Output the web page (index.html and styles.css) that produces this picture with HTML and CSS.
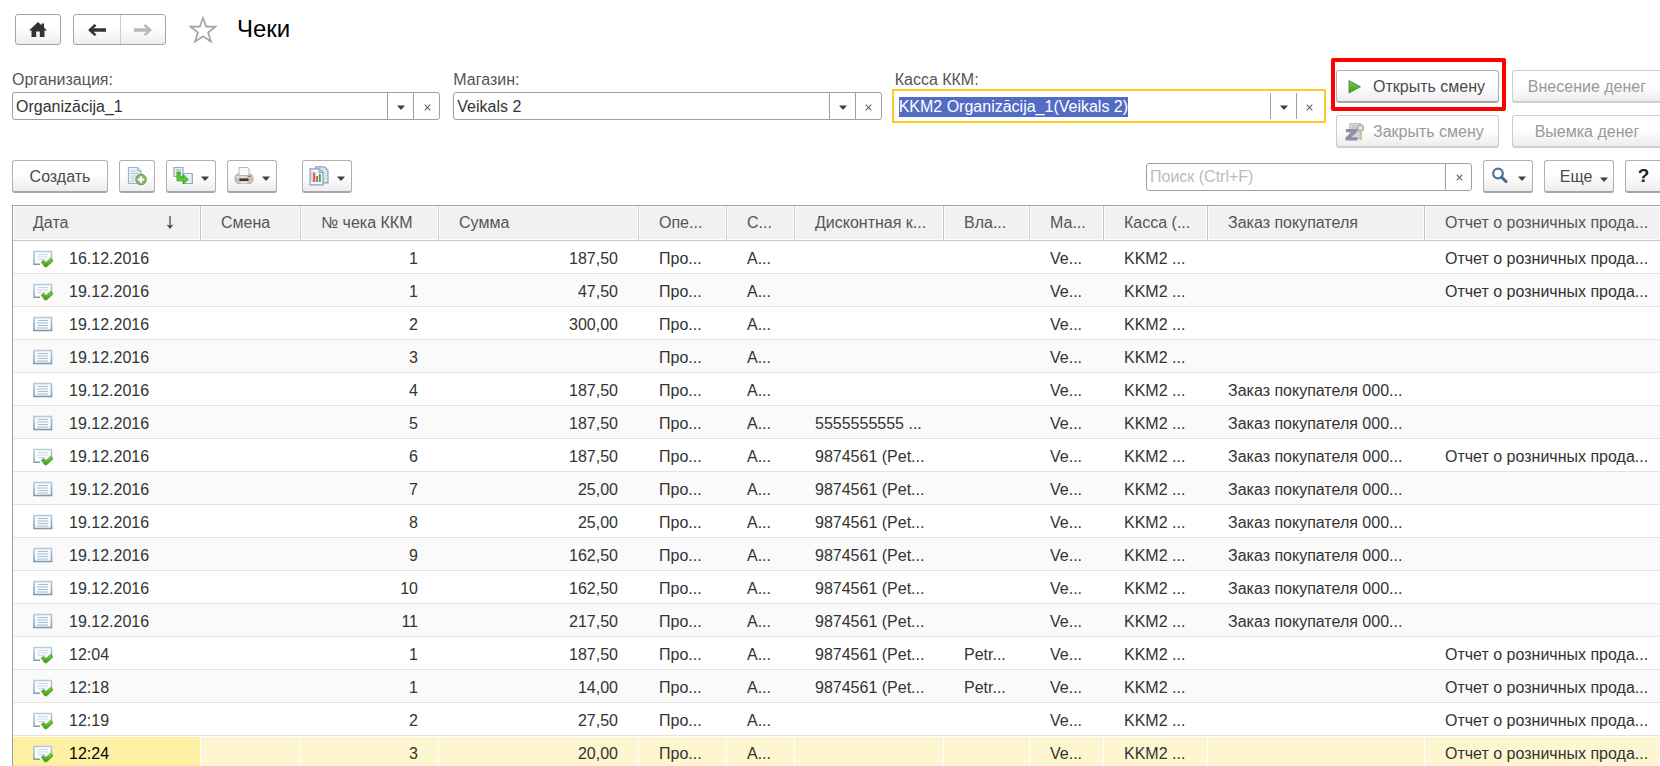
FILE: index.html
```html
<!DOCTYPE html>
<html lang="ru">
<head>
<meta charset="utf-8">
<title>Чеки</title>
<link rel="stylesheet" href="styles.css">
</head>
<body>
<svg class="sprite" aria-hidden="true">
  <defs>
    <linearGradient id="paper" x1="0" y1="0" x2="0" y2="1"><stop offset="0" stop-color="#b9cbdb"/><stop offset="1" stop-color="#8298ab"/></linearGradient>
    <linearGradient id="green" x1="0" y1="0" x2="0" y2="1"><stop offset="0" stop-color="#7ad04a"/><stop offset="1" stop-color="#3a9a1c"/></linearGradient>
  </defs>
  <symbol id="doc" viewBox="0 0 20 18">
    <rect x="1" y="1.500" width="17.500" height="13" fill="#f7fafc" stroke="url(#paper)" stroke-width="1.600"/>
    <path d="M5 4.500h10M4 7h11M5 9.500h10M4 12h11" stroke="#a3bfd4" stroke-width="1.200"/>
  </symbol>
  <symbol id="posted" viewBox="0 0 20 18">
    <path d="M7 14.300H1V1.500h17.500v7" fill="#fbfcfd" stroke="url(#paper)" stroke-width="1.400"/>
    <path d="M5 4.500h10M4 7h11M5 9.500h7" stroke="#ccd9e4" stroke-width="1.200"/>
    <path d="M8.300 12.200l2-2 2.800 2.200 4.600-4.200 1.800 1.400v2L13.400 17l-1.700-.3z" fill="url(#green)" stroke="#43962a" stroke-width=".7"/>
  </symbol>
  <symbol id="down" viewBox="0 0 8 5"><path d="M0 .5h8L4.500 4.500h-1z" fill="#404040"/></symbol>
  <symbol id="cross" viewBox="0 0 7 7"><path d="M.7.700l5.600 5.600M6.300.700L.7 6.300" stroke="#666" stroke-width="1.100"/></symbol>
</svg>

<div class="page">
  <header class="topbar">
    <button class="btn nav home" aria-label="Домой"><svg width="18" height="16" viewBox="0 0 18 16"><path d="M9 0L0 8.500h2.500V15h4.700V9.500h3.600V15h4.700V8.500H18l-3-2.900V1.500h-2.500v1.800z" fill="#333"/></svg></button>
    <div class="btn history">
      <button class="nav" aria-label="Назад"><svg width="18" height="14" viewBox="0 0 18 14"><path d="M0 7l6.500-6 2 1.700L5.500 5.300H18v3.400H5.500l3 2.700-2 1.600z" fill="#333"/></svg></button>
      <button class="nav" aria-label="Вперед" disabled><svg width="18" height="14" viewBox="0 0 18 14"><path d="M18 7l-6.500-6-2 1.700 3 2.600H0v3.400h12.500l-3 2.700 2 1.600z" fill="#b8b8b8"/></svg></button>
    </div>
    <button class="star" aria-label="В избранное"><svg width="28" height="28" viewBox="0 0 28 28"><path d="M14 2l3.200 8.700H26.500l-7.400 5.800L22 25.700l-8-5.500-8 5.500 2.900-9.200-7.400-5.800h9.300z" fill="#fff" stroke="#a3a3a3" stroke-width="1.700"/></svg></button>
    <h1 class="title">Чеки</h1>
  </header>

  <section class="filters">
    <div class="field">
      <label for="org">Организация:</label>
      <div class="combo"><input id="org" type="text" value="Organizācija_1"><button aria-label="Выбрать"><svg class="arrow"><use href="#down"/></svg></button><button aria-label="Очистить"><svg class="clear"><use href="#cross"/></svg></button></div>
    </div>
    <div class="field">
      <label for="shop">Магазин:</label>
      <div class="combo"><input id="shop" type="text" value="Veikals 2"><button aria-label="Выбрать"><svg class="arrow"><use href="#down"/></svg></button><button aria-label="Очистить"><svg class="clear"><use href="#cross"/></svg></button></div>
    </div>
    <div class="field">
      <label for="kkm">Касса ККМ:</label>
      <div class="combo active"><input id="kkm" type="text" value="KKM2 Organizācija_1(Veikals 2)"><button aria-label="Выбрать"><svg class="arrow"><use href="#down"/></svg></button><button aria-label="Очистить"><svg class="clear"><use href="#cross"/></svg></button></div>
    </div>
    <div class="shift">
      <div class="marked"><button class="btn wide"><svg width="20" height="18" viewBox="0 0 20 18"><path d="M4 2.500l11.500 6.300L4 15z" fill="url(#green)" stroke="#4d7d45" stroke-width=".8"/></svg>Открыть смену</button></div>
      <button class="btn" disabled>Внесение денег</button>
      <button class="btn wide" disabled><svg width="20" height="18" viewBox="0 0 20 18"><path d="M4.500 .5h11v15h-11z" fill="#d6d6d6" stroke="#c4c4c4"/><path d="M6.500 3h5M6.500 5h5" stroke="#bbb"/><circle cx="15.500" cy="5" r="3" fill="#e8e0cc" stroke="#b5ad9c" stroke-width="1.400"/><path d="M14.500 8h2.500v9h-2.500z" fill="#c9c1ae"/><path d="M1 6h11.500v2.600L6.300 14.300h6.200v3.200H.5v-3.200L6.500 9.200H1z" fill="#8e8ea6"/></svg>Закрыть смену</button>
      <button class="btn" disabled>Выемка денег</button>
    </div>
  </section>

  <section class="toolbar">
    <button class="btn create">Создать</button>
    <button class="btn square" aria-label="Скопировать"><svg width="20" height="20" viewBox="0 0 20 20"><path d="M1.500 1.500h9l3.500 3.500v12.500H1.500z" fill="#edf3f8" stroke="#9db4c8" stroke-width="1.200"/><path d="M10.500 1.500V5H14" fill="#cddbe7" stroke="#9db4c8"/><path d="M3.500 5h5M3.500 7.500h8M3.500 10h7M3.500 12.500h4M3.500 15h4" stroke="#a9c2d6"/><circle cx="14" cy="13.500" r="5.300" fill="#86ba68" stroke="#699b51" stroke-width="1"/><path d="M14 10.300v6.400M10.800 13.500h6.400" stroke="#fff" stroke-width="2.200"/></svg></button>
    <button class="btn drop" aria-label="Создать на основании"><svg width="20" height="20" viewBox="0 0 20 20"><path d="M1 1.500h9v9H1z" fill="#e9f0f6" stroke="#8faac1" stroke-width="1.200"/><path d="M3 4h5M3 6h5" stroke="#8faac1"/><path d="M10 7.500h9.300v10H10z" fill="#eaf2f8" stroke="#8faac1" stroke-width="1.200"/><path d="M4 6.500h3.200v5h3.300V8.800l4.700 4.700-4.700 4.500v-3.200H4z" fill="#56cf2e" stroke="#2fa314" stroke-width=".9"/></svg><svg class="arrow"><use href="#down"/></svg></button>
    <button class="btn drop" aria-label="Печать"><svg width="20" height="20" viewBox="0 0 20 20"><path d="M3 8h14l2 2v5l-2 2.500H3L1 15v-5z" fill="#cdbfb4" stroke="#b9aba0" stroke-width=".8"/><path d="M5 1.500h8.500L15 3v6.500H5z" fill="#f8fafc" stroke="#a9b9c8"/><path d="M2 11h16" stroke="#e9dfd6" stroke-width="1.500"/><path d="M5.500 12.500h9V15h-9z" fill="#3d3430"/><path d="M6.500 15.500h7v1.800h-7z" fill="#f1e9e1"/><path d="M13.500 10.500H17" stroke="#d0604f" stroke-width="1.400"/></svg><svg class="arrow"><use href="#down"/></svg></button>
    <button class="btn drop report" aria-label="Отчеты"><svg width="20" height="20" viewBox="0 0 20 20"><path d="M6.500.800h9l3.500 3.500v12.500H6.500z" fill="#d9e5ee" stroke="#8ba5ba" stroke-width="1.200"/><path d="M1 2.800h9l4 3.500v12.500H1z" fill="#f2f7fa" stroke="#86a1b8" stroke-width="1.200"/><path d="M10 3v3.500h4" fill="none" stroke="#86a1b8"/><path d="M3 5v10.500h9" fill="none" stroke="#a8bccd"/><path d="M5.200 6.500v9" stroke="#e24b42" stroke-width="2"/><path d="M8 10v5.500" stroke="#b6615b" stroke-width="1.800"/><path d="M10.800 8v7.500" stroke="#43ac42" stroke-width="2"/></svg><svg class="arrow"><use href="#down"/></svg></button>
    <div class="combo search"><input type="text" placeholder="Поиск (Ctrl+F)" aria-label="Поиск"><button aria-label="Очистить"><svg class="clear"><use href="#cross"/></svg></button></div>
    <button class="btn drop" aria-label="Найти"><svg width="20" height="20" viewBox="0 0 20 20"><circle cx="8" cy="7.500" r="4.800" fill="#fff" stroke="#4f7599" stroke-width="2.200"/><path d="M11.500 11l4.500 4.500" stroke="#426a91" stroke-width="3" stroke-linecap="round"/></svg><svg class="arrow"><use href="#down"/></svg></button>
    <button class="btn more">Еще<svg class="arrow"><use href="#down"/></svg></button>
    <button class="btn help" aria-label="Справка">?</button>
  </section>

  <div class="list">
    <table class="grid">
      <colgroup><col class="w-date"><col class="w-shift"><col class="w-no"><col class="w-sum"><col class="w-op"><col class="w-c"><col class="w-card"><col class="w-owner"><col class="w-shop"><col class="w-kkm"><col class="w-order"><col></colgroup>
      <thead>
        <tr><th><div class="sorted">Дата<svg width="8" height="14" viewBox="0 0 8 14"><path d="M4 0v12" stroke="#555" stroke-width="1.400"/><path d="M.5 8.500L4 13l3.500-4.500L4 9.800z" fill="#444"/></svg></div></th><th>Смена</th><th>№ чека ККМ</th><th>Сумма</th><th>Опе...</th><th>С...</th><th>Дисконтная к...</th><th>Вла...</th><th>Ма...</th><th>Касса (...</th><th>Заказ покупателя</th><th>Отчет о розничных прода...</th></tr>
      </thead>
      <tbody>
        <tr><td><svg class="row-icon"><use href="#posted"/></svg>16.12.2016</td><td></td><td class="num">1</td><td class="num">187,50</td><td>Про...</td><td>А...</td><td></td><td></td><td>Ve...</td><td>KKM2 ...</td><td></td><td>Отчет о розничных прода...</td></tr>
        <tr><td><svg class="row-icon"><use href="#posted"/></svg>19.12.2016</td><td></td><td class="num">1</td><td class="num">47,50</td><td>Про...</td><td>А...</td><td></td><td></td><td>Ve...</td><td>KKM2 ...</td><td></td><td>Отчет о розничных прода...</td></tr>
        <tr><td><svg class="row-icon"><use href="#doc"/></svg>19.12.2016</td><td></td><td class="num">2</td><td class="num">300,00</td><td>Про...</td><td>А...</td><td></td><td></td><td>Ve...</td><td>KKM2 ...</td><td></td><td></td></tr>
        <tr><td><svg class="row-icon"><use href="#doc"/></svg>19.12.2016</td><td></td><td class="num">3</td><td></td><td>Про...</td><td>А...</td><td></td><td></td><td>Ve...</td><td>KKM2 ...</td><td></td><td></td></tr>
        <tr><td><svg class="row-icon"><use href="#doc"/></svg>19.12.2016</td><td></td><td class="num">4</td><td class="num">187,50</td><td>Про...</td><td>А...</td><td></td><td></td><td>Ve...</td><td>KKM2 ...</td><td>Заказ покупателя 000...</td><td></td></tr>
        <tr><td><svg class="row-icon"><use href="#doc"/></svg>19.12.2016</td><td></td><td class="num">5</td><td class="num">187,50</td><td>Про...</td><td>А...</td><td>5555555555 ...</td><td></td><td>Ve...</td><td>KKM2 ...</td><td>Заказ покупателя 000...</td><td></td></tr>
        <tr><td><svg class="row-icon"><use href="#posted"/></svg>19.12.2016</td><td></td><td class="num">6</td><td class="num">187,50</td><td>Про...</td><td>А...</td><td>9874561 (Pet...</td><td></td><td>Ve...</td><td>KKM2 ...</td><td>Заказ покупателя 000...</td><td>Отчет о розничных прода...</td></tr>
        <tr><td><svg class="row-icon"><use href="#doc"/></svg>19.12.2016</td><td></td><td class="num">7</td><td class="num">25,00</td><td>Про...</td><td>А...</td><td>9874561 (Pet...</td><td></td><td>Ve...</td><td>KKM2 ...</td><td>Заказ покупателя 000...</td><td></td></tr>
        <tr><td><svg class="row-icon"><use href="#doc"/></svg>19.12.2016</td><td></td><td class="num">8</td><td class="num">25,00</td><td>Про...</td><td>А...</td><td>9874561 (Pet...</td><td></td><td>Ve...</td><td>KKM2 ...</td><td>Заказ покупателя 000...</td><td></td></tr>
        <tr><td><svg class="row-icon"><use href="#doc"/></svg>19.12.2016</td><td></td><td class="num">9</td><td class="num">162,50</td><td>Про...</td><td>А...</td><td>9874561 (Pet...</td><td></td><td>Ve...</td><td>KKM2 ...</td><td>Заказ покупателя 000...</td><td></td></tr>
        <tr><td><svg class="row-icon"><use href="#doc"/></svg>19.12.2016</td><td></td><td class="num">10</td><td class="num">162,50</td><td>Про...</td><td>А...</td><td>9874561 (Pet...</td><td></td><td>Ve...</td><td>KKM2 ...</td><td>Заказ покупателя 000...</td><td></td></tr>
        <tr><td><svg class="row-icon"><use href="#doc"/></svg>19.12.2016</td><td></td><td class="num">11</td><td class="num">217,50</td><td>Про...</td><td>А...</td><td>9874561 (Pet...</td><td></td><td>Ve...</td><td>KKM2 ...</td><td>Заказ покупателя 000...</td><td></td></tr>
        <tr><td><svg class="row-icon"><use href="#posted"/></svg>12:04</td><td></td><td class="num">1</td><td class="num">187,50</td><td>Про...</td><td>А...</td><td>9874561 (Pet...</td><td>Petr...</td><td>Ve...</td><td>KKM2 ...</td><td></td><td>Отчет о розничных прода...</td></tr>
        <tr><td><svg class="row-icon"><use href="#posted"/></svg>12:18</td><td></td><td class="num">1</td><td class="num">14,00</td><td>Про...</td><td>А...</td><td>9874561 (Pet...</td><td>Petr...</td><td>Ve...</td><td>KKM2 ...</td><td></td><td>Отчет о розничных прода...</td></tr>
        <tr><td><svg class="row-icon"><use href="#posted"/></svg>12:19</td><td></td><td class="num">2</td><td class="num">27,50</td><td>Про...</td><td>А...</td><td></td><td></td><td>Ve...</td><td>KKM2 ...</td><td></td><td>Отчет о розничных прода...</td></tr>
        <tr class="selected"><td><svg class="row-icon"><use href="#posted"/></svg>12:24</td><td></td><td class="num">3</td><td class="num">20,00</td><td>Про...</td><td>А...</td><td></td><td></td><td>Ve...</td><td>KKM2 ...</td><td></td><td>Отчет о розничных прода...</td></tr>
      </tbody>
    </table>
  </div>
</div>
<script src="main.js"></script>
</body>
</html>
```
FILE: main.js
```js
const active = document.getElementById('kkm');
active.focus();
active.select();
```
FILE: styles.css
```css
* { box-sizing: border-box; }
body {
  margin: 0;
  height: 100vh;
  overflow: hidden;
  background: #fff;
  color: #333;
  font: 16px/20px "Liberation Sans", Arial, sans-serif;
}
.sprite { position: absolute; width: 0; height: 0; }
button, input { font: inherit; color: inherit; }
button { margin: 0; padding: 0; border: 0; background: none; }
svg { flex: none; }

.page {
  display: flex;
  flex-direction: column;
  gap: 12px;
  height: 100%;
  padding: 14px 0 0 12px;
  overflow: hidden;
}

.btn {
  display: flex;
  align-items: center;
  justify-content: center;
  height: 33px;
  padding-top: 2px;
  border: 1px solid #b0b0b0;
  border-bottom: 2px solid #a6a6a6;
  border-radius: 3px;
  background: linear-gradient(#fff 45%, #ededed);
  color: #4a4a4a;
  white-space: nowrap;
}
.btn:disabled { border-color: #cfcfcf; color: #999; }
.arrow { width: 8px; height: 5px; }
.clear { width: 7px; height: 7px; }

.topbar { display: flex; align-items: center; height: 31px; padding-left: 3px; }
.topbar .btn { height: 31px; padding: 0; border: 1px solid #a6a6a6; }
.nav { display: flex; align-items: center; justify-content: center; width: 46px; }
.history { margin-left: 12px; }
.history .nav { height: 100%; }
.history .nav + .nav { width: 45px; border-left: 1px solid #d0d0d0; }
.star { display: flex; margin-left: 23px; }
.title { margin: 0 0 2px 20px; color: #000; font-size: 24px; font-weight: 400; line-height: 28px; }

.filters { display: flex; gap: 13px; margin: 13px -2px 0 0; }
.field { flex: 1; min-width: 0; }
.field label { display: block; margin-bottom: 2px; color: #555; }
.combo { display: flex; height: 28px; border: 1px solid #a0a0a0; border-radius: 3px; background: #fff; }
.combo input { flex: 1; min-width: 0; padding: 2px 3px 0; border: 0; outline: 0; background: none; }
.combo input::placeholder { color: #bbb; }
.combo input::selection { background: rgba(80, 106, 196, 0.99); color: #fff; }
.combo button { display: flex; align-items: center; justify-content: center; width: 26px; padding: 2px 0 0 1px; border-left: 1px solid #a0a0a0; }
.combo.active { border-color: transparent; border-radius: 0; outline: 2px solid #fc2; outline-offset: 1px; }
.combo.search input { padding-top: 0; }

.shift { display: grid; grid-template-columns: 163px 150px; gap: 12px 13px; }
.shift .wide { justify-content: flex-start; gap: 8px; width: 100%; padding-left: 8px; }
.marked { position: relative; }
.marked::after {
  content: "";
  position: absolute;
  inset: -12px -7px -8px -5px;
  border: 4px solid #f00;
  border-radius: 2px;
  pointer-events: none;
}

.toolbar { display: flex; align-items: center; gap: 11px; margin-right: -2px; }
.create { width: 96px; }
.square { width: 36px; padding-top: 0; }
.drop { gap: 8px; width: 50px; padding-top: 0; }
.drop .arrow, .more .arrow { margin-top: 4px; }
.report { margin-left: 14px; }
.search { width: 326px; margin-left: auto; }
.more { gap: 8px; width: 70px; padding-left: 10px; }
.help { width: 37px; padding-top: 0; color: #222; font-size: 19px; font-weight: 700; }

.list { flex: 1; min-height: 0; overflow: hidden; border-top: 1px solid #a0a0a0; border-left: 1px solid #a0a0a0; }
.grid { width: 100%; table-layout: fixed; border-collapse: separate; border-spacing: 0; }
.grid th {
  height: 35px;
  padding: 0 19px 0 20px;
  border-right: 1px solid #c8c8c8;
  border-bottom: 1px solid #c8c8c8;
  background: #f1f1f1;
  box-shadow: inset 0 0 0 1px #fff;
  color: #555;
  font-weight: 400;
  text-align: left;
  white-space: nowrap;
}
.grid th:last-child { padding-right: 0; border-right: 0; }
.sorted { display: flex; align-items: center; justify-content: space-between; padding-right: 7px; }
.grid td { height: 33px; padding: 4px 0 0 20px; border-bottom: 1px solid #e3e3e3; white-space: nowrap; }
.grid .num { padding-right: 21px; text-align: right; }
.grid tbody tr:nth-child(even) { background: #fafafa; }
.grid tbody .selected td { border-right: 1px solid #fff; background: #fdf6d0; box-shadow: inset 0 1px #fff; }
.grid tbody .selected td:first-child { background: #fdf0a3; color: #000; }
.grid tbody .selected .num { padding-right: 20px; }
.row-icon { width: 20px; height: 18px; margin-right: 16px; vertical-align: -4px; }

.w-date { width: 188px; }
.w-shift { width: 100px; }
.w-no { width: 138px; }
.w-sum { width: 200px; }
.w-op { width: 88px; }
.w-c { width: 68px; }
.w-card { width: 149px; }
.w-owner { width: 86px; }
.w-shop { width: 74px; }
.w-kkm { width: 104px; }
.w-order { width: 217px; }
```
